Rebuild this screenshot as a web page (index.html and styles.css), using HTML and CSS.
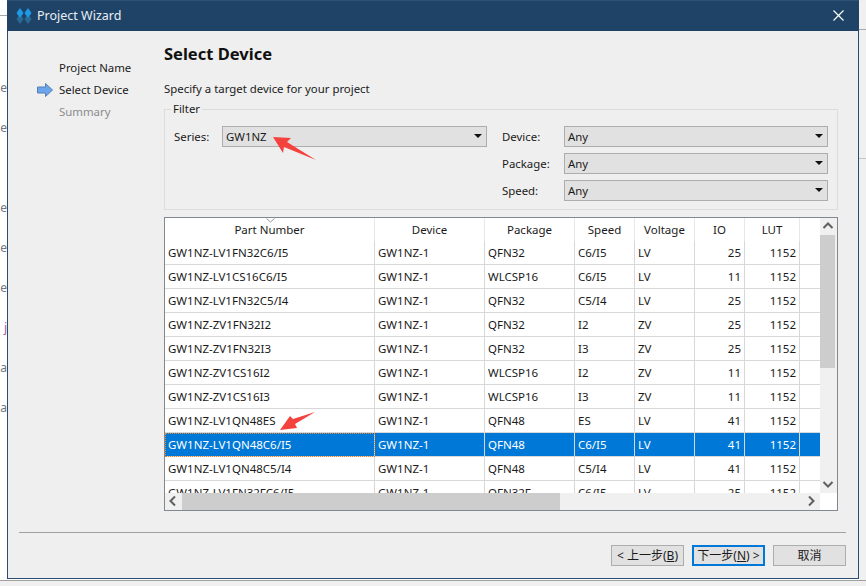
FILE: index.html
```html
<!DOCTYPE html>
<html>
<head>
    <title>Project Wizard</title>
    <link rel="stylesheet" href="styles.css">
</head>
<body>
    <div class="desktop">
        <!-- pieces of the main window showing behind the dialog -->
        <div class="behind-right"></div>
        <div class="behind-line line-a"></div>
        <div class="behind-line line-b"></div>
        <div class="behind-line line-c"></div>
        <div class="behind-bottom"></div>
        <span class="behind-text t1">e</span>
        <span class="behind-text t2">e</span>
        <span class="behind-text t3">e</span>
        <span class="behind-text t4">e</span>
        <span class="behind-text t5">e</span>
        <span class="behind-text t6">j</span>
        <span class="behind-text t7">ca</span>
        <span class="behind-text t8">ca</span>

        <div class="wizard">
            <div class="titlebar">
                <svg class="logo" width="16" height="17" viewBox="0 0 16 17">
                    <polygon points="4,7 7.5,12 4,17 0.5,12" fill="#2a6a95"/>
                    <polygon points="12,7 15.5,12 12,17 8.5,12" fill="#2a6a95"/>
                    <polygon points="4,1 7.5,6 4,11 0.5,6" fill="#1e9be8"/>
                    <polygon points="12,1 15.5,6 12,11 8.5,6" fill="#1e9be8"/>
                </svg>
                <span class="title">Project Wizard</span>
                <svg class="close" width="11" height="11" viewBox="0 0 11 11">
                    <path d="M0.5 0.5L10.5 10.5M10.5 0.5L0.5 10.5" stroke="#fff" stroke-width="1.2" fill="none"/>
                </svg>
            </div>

            <div class="content">
                <ul class="steps">
                    <li>Project Name</li>
                    <li class="current">
                        <svg class="step-arrow" width="16" height="14" viewBox="0 0 16 14">
                            <polygon points="0.5,4 8.5,4 8.5,0.5 15.5,7 8.5,13.5 8.5,10 0.5,10" fill="#6aa5ee" stroke="#5a7fb0"/>
                        </svg>
                        Select Device
                    </li>
                    <li class="todo">Summary</li>
                </ul>

                <div class="main">
                    <h1>Select Device</h1>
                    <p class="hint">Specify a target device for your project</p>

                    <fieldset class="filter">
                        <legend>Filter</legend>
                        <div class="filter-left">
                            <label>Series:</label>
                            <div class="combo">GW1NZ<i class="caret"></i></div>
                        </div>
                        <div class="filter-right">
                            <label>Device:</label>
                            <div class="combo">Any<i class="caret"></i></div>
                            <label>Package:</label>
                            <div class="combo">Any<i class="caret"></i></div>
                            <label>Speed:</label>
                            <div class="combo">Any<i class="caret"></i></div>
                        </div>
                    </fieldset>

                    <div class="grid">
                        <div class="viewport">
                            <table>
                                <colgroup>
                                    <col class="c-part"><col class="c-dev"><col class="c-pkg"><col class="c-speed">
                                    <col class="c-volt"><col class="c-io"><col class="c-lut"><col class="c-rest">
                                </colgroup>
                                <thead>
                                    <tr>
                                        <th>Part Number</th><th>Device</th><th>Package</th><th>Speed</th>
                                        <th>Voltage</th><th>IO</th><th>LUT</th><th></th>
                                    </tr>
                                </thead>
                                <tbody>
                                    <tr><td>GW1NZ-LV1FN32C6/I5</td><td>GW1NZ-1</td><td>QFN32</td><td>C6/I5</td><td>LV</td><td class="num">25</td><td class="num">1152</td><td></td></tr>
                                    <tr><td>GW1NZ-LV1CS16C6/I5</td><td>GW1NZ-1</td><td>WLCSP16</td><td>C6/I5</td><td>LV</td><td class="num">11</td><td class="num">1152</td><td></td></tr>
                                    <tr><td>GW1NZ-LV1FN32C5/I4</td><td>GW1NZ-1</td><td>QFN32</td><td>C5/I4</td><td>LV</td><td class="num">25</td><td class="num">1152</td><td></td></tr>
                                    <tr><td>GW1NZ-ZV1FN32I2</td><td>GW1NZ-1</td><td>QFN32</td><td>I2</td><td>ZV</td><td class="num">25</td><td class="num">1152</td><td></td></tr>
                                    <tr><td>GW1NZ-ZV1FN32I3</td><td>GW1NZ-1</td><td>QFN32</td><td>I3</td><td>ZV</td><td class="num">25</td><td class="num">1152</td><td></td></tr>
                                    <tr><td>GW1NZ-ZV1CS16I2</td><td>GW1NZ-1</td><td>WLCSP16</td><td>I2</td><td>ZV</td><td class="num">11</td><td class="num">1152</td><td></td></tr>
                                    <tr><td>GW1NZ-ZV1CS16I3</td><td>GW1NZ-1</td><td>WLCSP16</td><td>I3</td><td>ZV</td><td class="num">11</td><td class="num">1152</td><td></td></tr>
                                    <tr><td>GW1NZ-LV1QN48ES</td><td>GW1NZ-1</td><td>QFN48</td><td>ES</td><td>LV</td><td class="num">41</td><td class="num">1152</td><td></td></tr>
                                    <tr class="selected"><td class="focus">GW1NZ-LV1QN48C6/I5</td><td>GW1NZ-1</td><td>QFN48</td><td>C6/I5</td><td>LV</td><td class="num">41</td><td class="num">1152</td><td></td></tr>
                                    <tr><td>GW1NZ-LV1QN48C5/I4</td><td>GW1NZ-1</td><td>QFN48</td><td>C5/I4</td><td>LV</td><td class="num">41</td><td class="num">1152</td><td></td></tr>
                                    <tr><td>GW1NZ-LV1FN32FC6/I5</td><td>GW1NZ-1</td><td>QFN32F</td><td>C6/I5</td><td>LV</td><td class="num">25</td><td class="num">1152</td><td></td></tr>
                                </tbody>
                            </table>
                            <svg class="sort-mark" width="9" height="5" viewBox="0 0 9 5">
                                <path d="M0.5 0.5L4.5 4L8.5 0.5" stroke="#999" fill="none"/>
                            </svg>
                        </div>
                        <div class="vscroll">
                            <svg class="sb-btn" width="16" height="17" viewBox="0 0 16 17">
                                <path d="M3.5 10L8 5.5L12.5 10" stroke="#606060" stroke-width="2" fill="none"/>
                            </svg>
                            <div class="vthumb"></div>
                            <svg class="sb-btn sb-end" width="16" height="17" viewBox="0 0 16 17">
                                <path d="M3.5 6L8 10.5L12.5 6" stroke="#606060" stroke-width="2" fill="none"/>
                            </svg>
                        </div>
                        <div class="hscroll">
                            <svg class="sb-btn" width="17" height="16" viewBox="0 0 17 16">
                                <path d="M10 3.5L5.5 8L10 12.5" stroke="#606060" stroke-width="2" fill="none"/>
                            </svg>
                            <div class="hthumb"></div>
                            <svg class="sb-btn sb-end" width="17" height="16" viewBox="0 0 17 16">
                                <path d="M6 3.5L10.5 8L6 12.5" stroke="#606060" stroke-width="2" fill="none"/>
                            </svg>
                        </div>
                        <div class="corner"></div>
                    </div>
                </div>
            </div>

            <div class="footer">
                <button type="button">&lt; 上一步(<u>B</u>)</button>
                <button type="button" class="default">下一步(<u>N</u>) &gt;</button>
                <button type="button">取消</button>
            </div>
        </div>

        <!-- red arrows drawn on the screenshot -->
        <svg class="mark mark-a" width="46" height="26" viewBox="0 0 46 26">
            <polygon points="1,1 19,2 15,6 44,24 12,11 11,17" fill="#f4423c"/>
        </svg>
        <svg class="mark mark-b" width="40" height="22" viewBox="0 0 40 22">
            <polygon points="39,1 17,8 14,5 4,19 21,17 19,13" fill="#f4423c"/>
        </svg>
    </div>
</body>
</html>
```

FILE: styles.css
```css
html, body {
  margin: 0;
  padding: 0;
}

body {
  font-family: "Noto Sans", "Noto Sans CJK SC", sans-serif;
  font-size: 11.4px;
  color: #1a1a1a;
  background-color: #fff;
}

.desktop {
  position: relative;
  width: 866px;
  height: 586px;
  overflow: hidden;
  padding-left: 7px;
  box-sizing: border-box;
}

/* main window behind the dialog */
.behind-right {
  position: absolute;
  left: 859px;
  top: 0;
  width: 7px;
  height: 586px;
  background-color: #f0f0f0;
}

.behind-line {
  position: absolute;
  height: 1px;
  background-color: #a8a8a8;
}

.line-a { left: 0; top: 15px; width: 7px; }
.line-b { left: 859px; top: 29px; width: 7px; }
.line-c { left: 859px; top: 158px; width: 7px; background-color: #c4c4c4; }

.behind-bottom {
  position: absolute;
  left: 0;
  top: 580px;
  width: 866px;
  height: 6px;
  background-color: #f0f0f0;
  border-top: 1px solid #a0a0a0;
  box-sizing: border-box;
}

.behind-text {
  position: absolute;
  color: #707880;
  font-size: 12px;
  line-height: 16px;
  right: 859px;
}

.t1 { top: 80px; }
.t2 { top: 120px; }
.t3 { top: 200px; }
.t4 { top: 240px; }
.t5 { top: 280px; }
.t6 { top: 320px; color: #a06090; }
.t7 { top: 360px; }
.t8 { top: 400px; }

/* dialog */
.wizard {
  position: relative;
  width: 852px;
  height: 579px;
  box-sizing: border-box;
  border: 1px solid #2b4c6f;
  border-top: none;
  background-color: #efefef;
  display: flex;
  flex-direction: column;
}

.titlebar {
  height: 31px;
  flex: none;
  margin: 0 -1px;
  padding: 0 15px 2px 9px;
  background-color: #1f4367;
  border-top: 1px solid #2d5075;
  box-sizing: border-box;
  display: flex;
  align-items: center;
  color: #fff;
}

.logo {
  flex: none;
  margin-right: 5px;
}

.title {
  font-size: 12.5px;
  color: #e8eef4;
  flex: 1;
}

.close {
  flex: none;
}

.content {
  flex: 1;
  display: flex;
  min-height: 0;
}

.steps {
  list-style: none;
  width: 156px;
  flex: none;
  margin: 0;
  padding: 26px 0 0 51px;
  box-sizing: border-box;
}

.steps li {
  position: relative;
  height: 22px;
  line-height: 22px;
}

.steps .todo {
  color: #8c8c8c;
}

.step-arrow {
  position: absolute;
  left: -22px;
  top: 4px;
}

.main {
  flex: 1;
  padding-right: 20px;
  min-width: 0;
}

h1 {
  font-size: 16.5px;
  line-height: 22px;
  font-weight: bold;
  color: #111;
  margin: 12px 0 0;
}

.hint {
  margin: 15px 0 0;
  line-height: 18px;
}

.filter {
  margin: 3px 0 0;
  padding: 0 9px 0;
  height: 109px;
  box-sizing: border-box;
  border: 1px solid #dcdcdc;
  display: flex;
  gap: 15px;
}

.filter legend {
  padding: 0 2px;
  margin-left: -3px;
  line-height: 16px;
}

.filter-left {
  display: grid;
  grid-template-columns: 48px 265px;
  align-items: start;
  margin-top: 9px;
}

.filter-right {
  display: grid;
  grid-template-columns: 62px 264px;
  grid-auto-rows: 21px;
  row-gap: 6px;
  align-items: center;
  margin-top: 9px;
}

.filter label {
  line-height: 21px;
}

.combo {
  position: relative;
  height: 21px;
  line-height: 19px;
  box-sizing: border-box;
  padding-left: 3px;
  border: 1px solid #adadad;
  background-color: #e1e1e1;
}

.caret {
  position: absolute;
  right: 4px;
  top: 7px;
  width: 0;
  height: 0;
  border-left: 4px solid transparent;
  border-right: 4px solid transparent;
  border-top: 4px solid #111;
}

/* device table */
.grid {
  margin-top: 7px;
  height: 294px;
  box-sizing: border-box;
  border: 1px solid #828790;
  display: grid;
  grid-template-columns: 1fr 17px;
  grid-template-rows: 1fr 17px;
  background-color: #fff;
}

.viewport {
  position: relative;
  overflow: hidden;
  background-color: #fff;
}

table {
  border-collapse: separate;
  border-spacing: 0;
  table-layout: fixed;
  width: 655px;
  font-size: 11.5px;
}

.c-part { width: 210px; }
.c-dev { width: 110px; }
.c-pkg { width: 90px; }
.c-speed { width: 60px; }
.c-volt { width: 60px; }
.c-io { width: 50px; }
.c-lut { width: 55px; }
.c-rest { width: 20px; }

th {
  height: 23px;
  padding: 0;
  font-weight: normal;
  text-align: center;
  border-right: 1px solid #e8e8e8;
  line-height: 23px;
}

th:last-child {
  border-right: none;
}

td {
  height: 24px;
  padding: 0 3px;
  box-sizing: border-box;
  line-height: 23px;
  white-space: nowrap;
  overflow: hidden;
  border-right: 1px solid #d8d8d8;
  border-bottom: 1px solid #d8d8d8;
}

td:last-child {
  border-right: none;
}

td.num {
  text-align: right;
}

.selected td {
  background-color: #0078d7;
  color: #fff;
}

.selected td.focus {
  outline: 1px dotted #e8892c;
  outline-offset: -1px;
}

.sort-mark {
  position: absolute;
  left: 101px;
  top: 0;
}

.vscroll, .hscroll {
  display: flex;
  background-color: #f0f0f0;
}

.vscroll {
  flex-direction: column;
}

.sb-btn {
  flex: none;
}

.sb-end {
  margin-top: auto;
}

.hscroll .sb-end {
  margin-top: 0;
  margin-left: auto;
}

.vthumb {
  width: 15px;
  height: 133px;
  background-color: #cdcdcd;
}

.hthumb {
  width: 378px;
  background-color: #cdcdcd;
}

.corner {
  background-color: #fff;
}

/* buttons */
.footer {
  flex: none;
  margin: 0 12px 0 11px;
  height: 46px;
  box-sizing: border-box;
  border-top: 1px solid #a0a0a0;
  padding: 12px 0 0;
  display: flex;
  justify-content: flex-end;
  gap: 8px;
}

button {
  width: 73px;
  height: 21px;
  padding: 0;
  font-family: inherit;
  font-size: 12px;
  line-height: 17px;
  color: #1a1a1a;
  background-color: #e1e1e1;
  border: 1px solid #adadad;
  border-radius: 0;
  box-sizing: border-box;
}

button.default {
  border: 2px solid #0078d7;
}

/* overlays */
.mark {
  position: absolute;
}

.mark-a {
  left: 272px;
  top: 136px;
}

.mark-b {
  left: 276px;
  top: 411px;
}
```
